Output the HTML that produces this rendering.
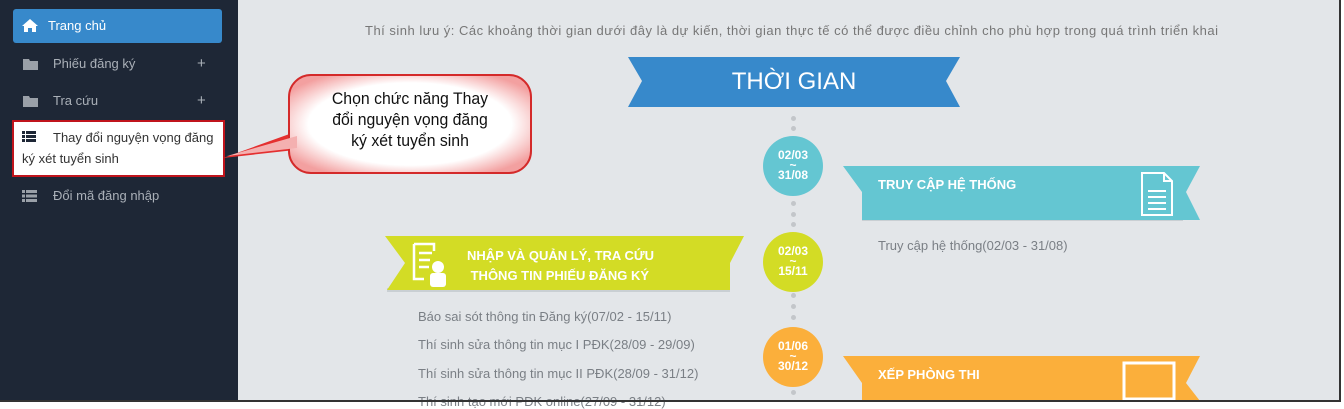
<!DOCTYPE html>
<html><head><meta charset="utf-8"><style>
*{margin:0;padding:0;box-sizing:border-box}
body{width:1344px;height:402px;overflow:hidden;background:#fff;font-family:"Liberation Sans",sans-serif;position:relative}
.main{position:absolute;left:0;top:0;width:1341px;height:401px;background:#e3e6e9;border-right:2px solid #333;border-bottom:1px solid #333}
.side{position:absolute;left:0;top:0;width:238px;height:401px;background:#1e2736}
.a{position:absolute;font-size:13px}
.mi{position:absolute;left:22px;color:#aab0b8;font-size:13px}
.t{position:absolute;color:#7a7f85;font-size:13px}
.c{position:absolute;width:60px;height:60px;border-radius:50%;color:#fff;font-weight:bold;font-size:12px;text-align:center}
.c span{position:absolute;left:0;width:60px}
.dot{position:absolute;left:791px;width:5px;height:5px;border-radius:50%;background:#c3c6ca}
</style></head><body>
<div class="main"></div>
<div class="side">
 <div style="position:absolute;left:13px;top:9px;width:209px;height:34px;background:#3789cb;border-radius:3px"></div>
 <svg style="position:absolute;left:22px;top:19px" width="16" height="13" viewBox="0 0 16 13"><path d="M8 0L0 7h2v6h4V9h4v4h4V7h2z" fill="#fff"/></svg>
 <div class="a" style="left:48px;top:18px;color:#fff">Trang chủ</div>
 <svg style="position:absolute;left:23px;top:58px" width="15" height="12"><path d="M0 1h6l1 2h8v9H0z" fill="#9aa0a8"/></svg>
 <div class="mi" style="left:53px;top:56px">Phiếu đăng ký</div>
 <div class="mi" style="left:197px;top:55px;font-size:15px">+</div>
 <svg style="position:absolute;left:23px;top:95px" width="15" height="12"><path d="M0 1h6l1 2h8v9H0z" fill="#9aa0a8"/></svg>
 <div class="mi" style="left:53px;top:93px">Tra cứu</div>
 <div class="mi" style="left:197px;top:92px;font-size:15px">+</div>
 <div style="position:absolute;left:12px;top:120px;width:213px;height:57px;background:#fff;border:2px solid #c0141c"></div>
 <svg style="position:absolute;left:22px;top:131px" width="14" height="11"><g fill="#1e2736"><rect x="0" y="0" width="3" height="3"/><rect x="4" y="0" width="10" height="3"/><rect x="0" y="4" width="3" height="3"/><rect x="4" y="4" width="10" height="3"/><rect x="0" y="8" width="3" height="3"/><rect x="4" y="8" width="10" height="3"/></g></svg>
 <div class="a" style="left:53px;top:130px;color:#333">Thay đổi nguyện vọng đăng</div>
 <div class="a" style="left:22px;top:151px;color:#333">ký xét tuyển sinh</div>
 <svg style="position:absolute;left:22px;top:190px" width="15" height="12"><g fill="#9aa0a8"><rect x="0" y="0" width="3" height="3"/><rect x="4" y="0" width="11" height="3"/><rect x="0" y="4.5" width="3" height="3"/><rect x="4" y="4.5" width="11" height="3"/><rect x="0" y="9" width="3" height="3"/><rect x="4" y="9" width="11" height="3"/></g></svg>
 <div class="mi" style="left:53px;top:188px">Đổi mã đăng nhập</div>
</div>

<!-- callout -->
<svg style="position:absolute;left:215px;top:70px" width="330" height="110">
 <defs><radialGradient id="r" cx="0.5" cy="0.5" r="0.6"><stop offset="0.7" stop-color="#fff"/><stop offset="1" stop-color="#f3a0a0"/></radialGradient></defs>
 <path d="M80 62 L8 88 L80 80 Z" fill="#e43030"/>
 <rect x="74" y="5" width="242" height="98" rx="22" fill="url(#r)" stroke="#d42a2a" stroke-width="2"/>
 <path d="M82 66 L12 86 L82 78 Z" fill="#f4b0b0"/>
</svg>
<div style="position:absolute;left:300px;top:88px;width:220px;text-align:center;font-size:17px;line-height:21px;color:#111;transform:scaleX(0.93)">Chọn chức năng Thay<br>đổi nguyện vọng đăng<br>ký xét tuyển sinh</div>

<div class="t" style="left:365px;top:23px;font-size:13px;color:#777;letter-spacing:0.5px;white-space:nowrap">Thí sinh lưu ý: Các khoảng thời gian dưới đây là dự kiến, thời gian thực tế có thể được điều chỉnh cho phù hợp trong quá trình triển khai</div>

<svg style="position:absolute;left:628px;top:57px" width="334" height="50"><path d="M0 0H332L318 24L332 50H0L14 24Z" fill="#3789cb"/></svg>
<div style="position:absolute;left:628px;top:68px;width:332px;text-align:center;color:#fff;font-size:24px">THỜI GIAN</div>

<div class="dot" style="top:116px"></div><div class="dot" style="top:126px"></div>
<div class="dot" style="top:201px"></div><div class="dot" style="top:212px"></div><div class="dot" style="top:222px"></div>
<div class="dot" style="top:293px"></div><div class="dot" style="top:304px"></div><div class="dot" style="top:315px"></div>
<div class="dot" style="top:390px"></div>

<div class="c" style="left:763px;top:136px;background:#64c6d2"><span style="top:12px">02/03</span><span style="top:22px">~</span><span style="top:32px">31/08</span></div>
<div class="c" style="left:763px;top:232px;background:#d3dc25"><span style="top:12px">02/03</span><span style="top:22px">~</span><span style="top:32px">15/11</span></div>
<div class="c" style="left:763px;top:327px;background:#fbaf3b"><span style="top:12px">01/06</span><span style="top:22px">~</span><span style="top:32px">30/12</span></div>

<!-- cyan banner -->
<svg style="position:absolute;left:843px;top:164px" width="360" height="62"><path d="M19 53H340V57H19z" fill="#b8c0c4" opacity=".6"/><path d="M0 2H357L343 28L357 56H19V28Z" fill="#64c6d2"/></svg>
<div style="position:absolute;left:878px;top:177px;color:#fff;font-weight:bold;font-size:13px">TRUY CẬP HỆ THỐNG</div>
<svg style="position:absolute;left:1140px;top:171px" width="34" height="46"><path d="M2 2H24L32 10V44H2Z M24 2V10H32" fill="none" stroke="#fff" stroke-width="2"/><path d="M8 20H26M8 26H26M8 32H26M8 38H26" stroke="#fff" stroke-width="2"/></svg>
<div class="t" style="left:878px;top:238px">Truy cập hệ thống(02/03 - 31/08)</div>

<!-- green banner -->
<svg style="position:absolute;left:385px;top:235px" width="362" height="60"><path d="M2 53H345V57H2z" fill="#b8c0c4" opacity=".6"/><path d="M0 1H359L345 28V55H2L20 28Z" fill="#d3dc25"/></svg>
<svg style="position:absolute;left:412px;top:241px" width="34" height="46"><path d="M2 3H22V10M2 3V38H12" fill="none" stroke="#fff" stroke-width="2.5"/><path d="M7 12H20M7 19H18M7 26H17" stroke="#fff" stroke-width="2.5"/><circle cx="26" cy="26" r="6" fill="#fff"/><rect x="18" y="32" width="16" height="14" rx="3" fill="#fff"/></svg>
<div style="position:absolute;left:467px;top:246px;color:#fff;font-weight:bold;font-size:13px;line-height:20px">NHẬP VÀ QUẢN LÝ, TRA CỨU<br>&nbsp;THÔNG TIN PHIẾU ĐĂNG KÝ</div>
<div class="t" style="left:418px;top:309px">Báo sai sót thông tin Đăng ký(07/02 - 15/11)</div>
<div class="t" style="left:418px;top:337px">Thí sinh sửa thông tin mục I PĐK(28/09 - 29/09)</div>
<div class="t" style="left:418px;top:366px">Thí sinh sửa thông tin mục II PĐK(28/09 - 31/12)</div>
<div class="t" style="left:418px;top:394px">Thí sinh tạo mới PĐK online(27/09 - 31/12)</div>

<svg style="position:absolute;left:843px;top:355px" width="360" height="46"><path d="M0 1H357L343 28L357 46H19V28Z" fill="#fbaf3b"/></svg>
<div style="position:absolute;left:878px;top:367px;color:#fff;font-weight:bold;font-size:13px">XẾP PHÒNG THI</div>
<svg style="position:absolute;left:1122px;top:361px" width="54" height="40"><rect x="2" y="2" width="50" height="36" fill="none" stroke="#fff" stroke-width="3"/></svg>
<div style="position:absolute;left:0;top:400px;width:1341px;height:2px;background:#333"></div>
<div style="position:absolute;left:1341px;top:0;width:3px;height:402px;background:#fff"></div>
</body></html>
